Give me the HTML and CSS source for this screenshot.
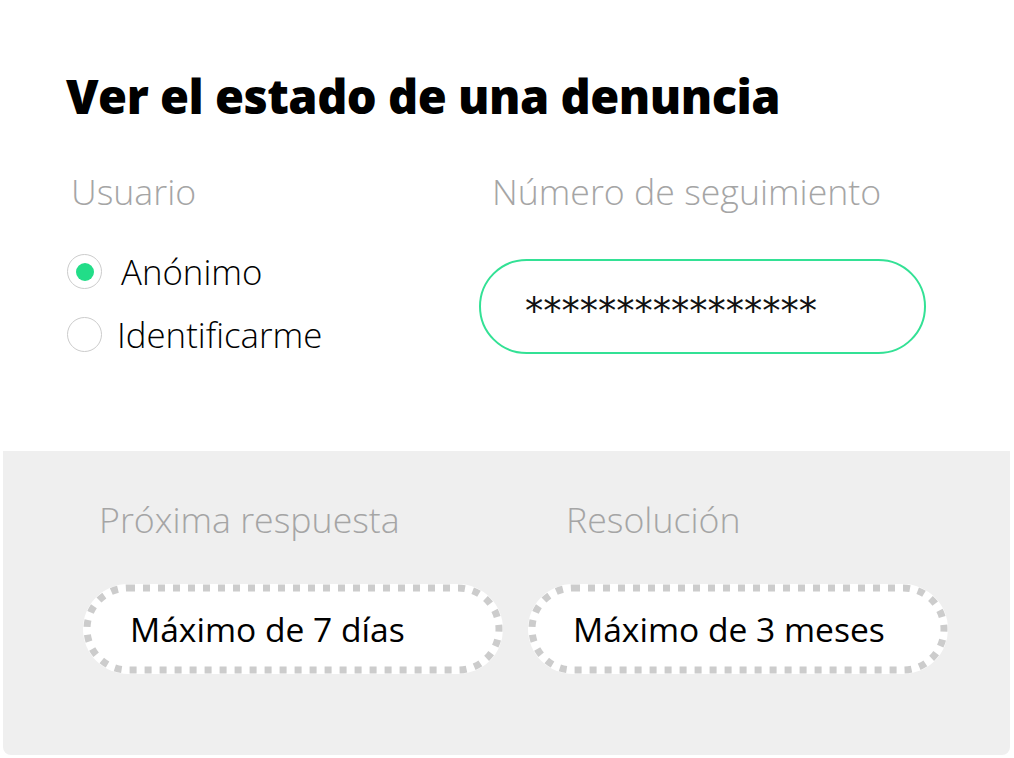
FILE: index.html
```html
<!DOCTYPE html>
<html lang="es">
<head>
<meta charset="utf-8">
<title>Ver el estado de una denuncia</title>
<link rel="stylesheet" href="styles.css">
</head>
<body>
<main class="page">
  <section class="top">
    <h1 class="title">Ver el estado de una denuncia</h1>
    <div class="fields">
      <div class="col col-user">
        <div class="label">Usuario</div>
        <div class="radios">
          <label class="radio"><span class="dot checked"></span><span class="radio-text">Anónimo</span></label>
          <label class="radio"><span class="dot"></span><span class="radio-text id">Identificarme</span></label>
        </div>
      </div>
      <div class="col col-track">
        <div class="label label-track">Número de seguimiento</div>
        <div class="input"><span class="stars">****************</span></div>
      </div>
    </div>
  </section>
  <section class="panel">
    <div class="info">
      <div class="label info-label l1">Próxima respuesta</div>
      <div class="pill">
        <svg class="dash" viewBox="0 0 420 90" width="420" height="90"><rect x="4" y="4" width="412" height="82" rx="41" ry="41"/></svg>
        <span class="pill-text">Máximo de 7 días</span>
      </div>
    </div>
    <div class="info">
      <div class="label info-label l2">Resolución</div>
      <div class="pill">
        <svg class="dash" viewBox="0 0 420 90" width="420" height="90"><rect x="4" y="4" width="412" height="82" rx="41" ry="41"/></svg>
        <span class="pill-text">Máximo de 3 meses</span>
      </div>
    </div>
  </section>
</main>
</body>
</html>
```
FILE: styles.css
```css
* { box-sizing: border-box; }
html, body { margin: 0; padding: 0; background: #ffffff; }
body {
  font-family: "Open Sans", "Noto Sans", sans-serif;
  color: #000;
  width: 1014px;
  height: 758px;
  overflow: hidden;
}
.page { display: flex; flex-direction: column; }
.top { padding: 64px 0 0 66px; height: 451px; }
.title {
  margin: 0;
  font-size: 47px;
  line-height: 64px;
  font-weight: 800;
  letter-spacing: -0.5px;
}
.fields { display: flex; margin-top: 41px; }
.col-user { width: 413px; }
.label {
  font-size: 35.7px;
  line-height: 44px;
  font-weight: 300;
  color: #a5a5a5;
}
.col-user .label { padding-left: 5px; }
.label-track { padding-left: 13px; }
.radios { display: flex; flex-direction: column; gap: 28px; margin-top: 41px; }
.radio { display: flex; align-items: center; height: 35px; }
.dot {
  width: 35px; height: 35px; border-radius: 50%;
  border: 1.5px solid #cccccc; background: #fff;
  display: flex; align-items: center; justify-content: center;
  margin-left: 1px;
}
.dot.checked::after {
  content: ""; width: 18px; height: 18px; border-radius: 50%; background: #22dd88;
}
.radio-text { font-size: 34.8px; font-weight: 300; margin-left: 19px; color: #000; }
.radio-text.id { margin-left: 15px; }
.input {
  margin-top: 46px;
  width: 447px; height: 95px;
  border: 2px solid #33e195;
  border-radius: 48px;
  display: flex; align-items: center;
  padding-left: 44px;
}
.stars { font-family: "DejaVu Sans", sans-serif; font-size: 36.5px; color: #111; position: relative; top: 5px; }
.panel {
  margin-left: 3px;
  width: 1007px;
  height: 304px;
  background: #efefef;
  border-radius: 0 0 8px 8px;
  display: flex;
  gap: 25px;
  padding: 46px 0 0 80px;
}
.info { display: flex; flex-direction: column; }
.l1 { padding-left: 16px; }
.l2 { padding-left: 38px; }
.pill {
  position: relative;
  margin-top: 43px;
  width: 420px; height: 90px;
  border-radius: 45px;
  background: #fff;
  display: flex; align-items: center;
}
.dash { position: absolute; left: 0; top: 0; }
.dash rect { fill: none; stroke: #cccccc; stroke-width: 7; stroke-dasharray: 7 8; }
.pill-text { font-size: 33.6px; color: #000; padding-left: 47px; position: relative; }
.info:nth-child(2) .pill-text { padding-left: 45px; }
```
